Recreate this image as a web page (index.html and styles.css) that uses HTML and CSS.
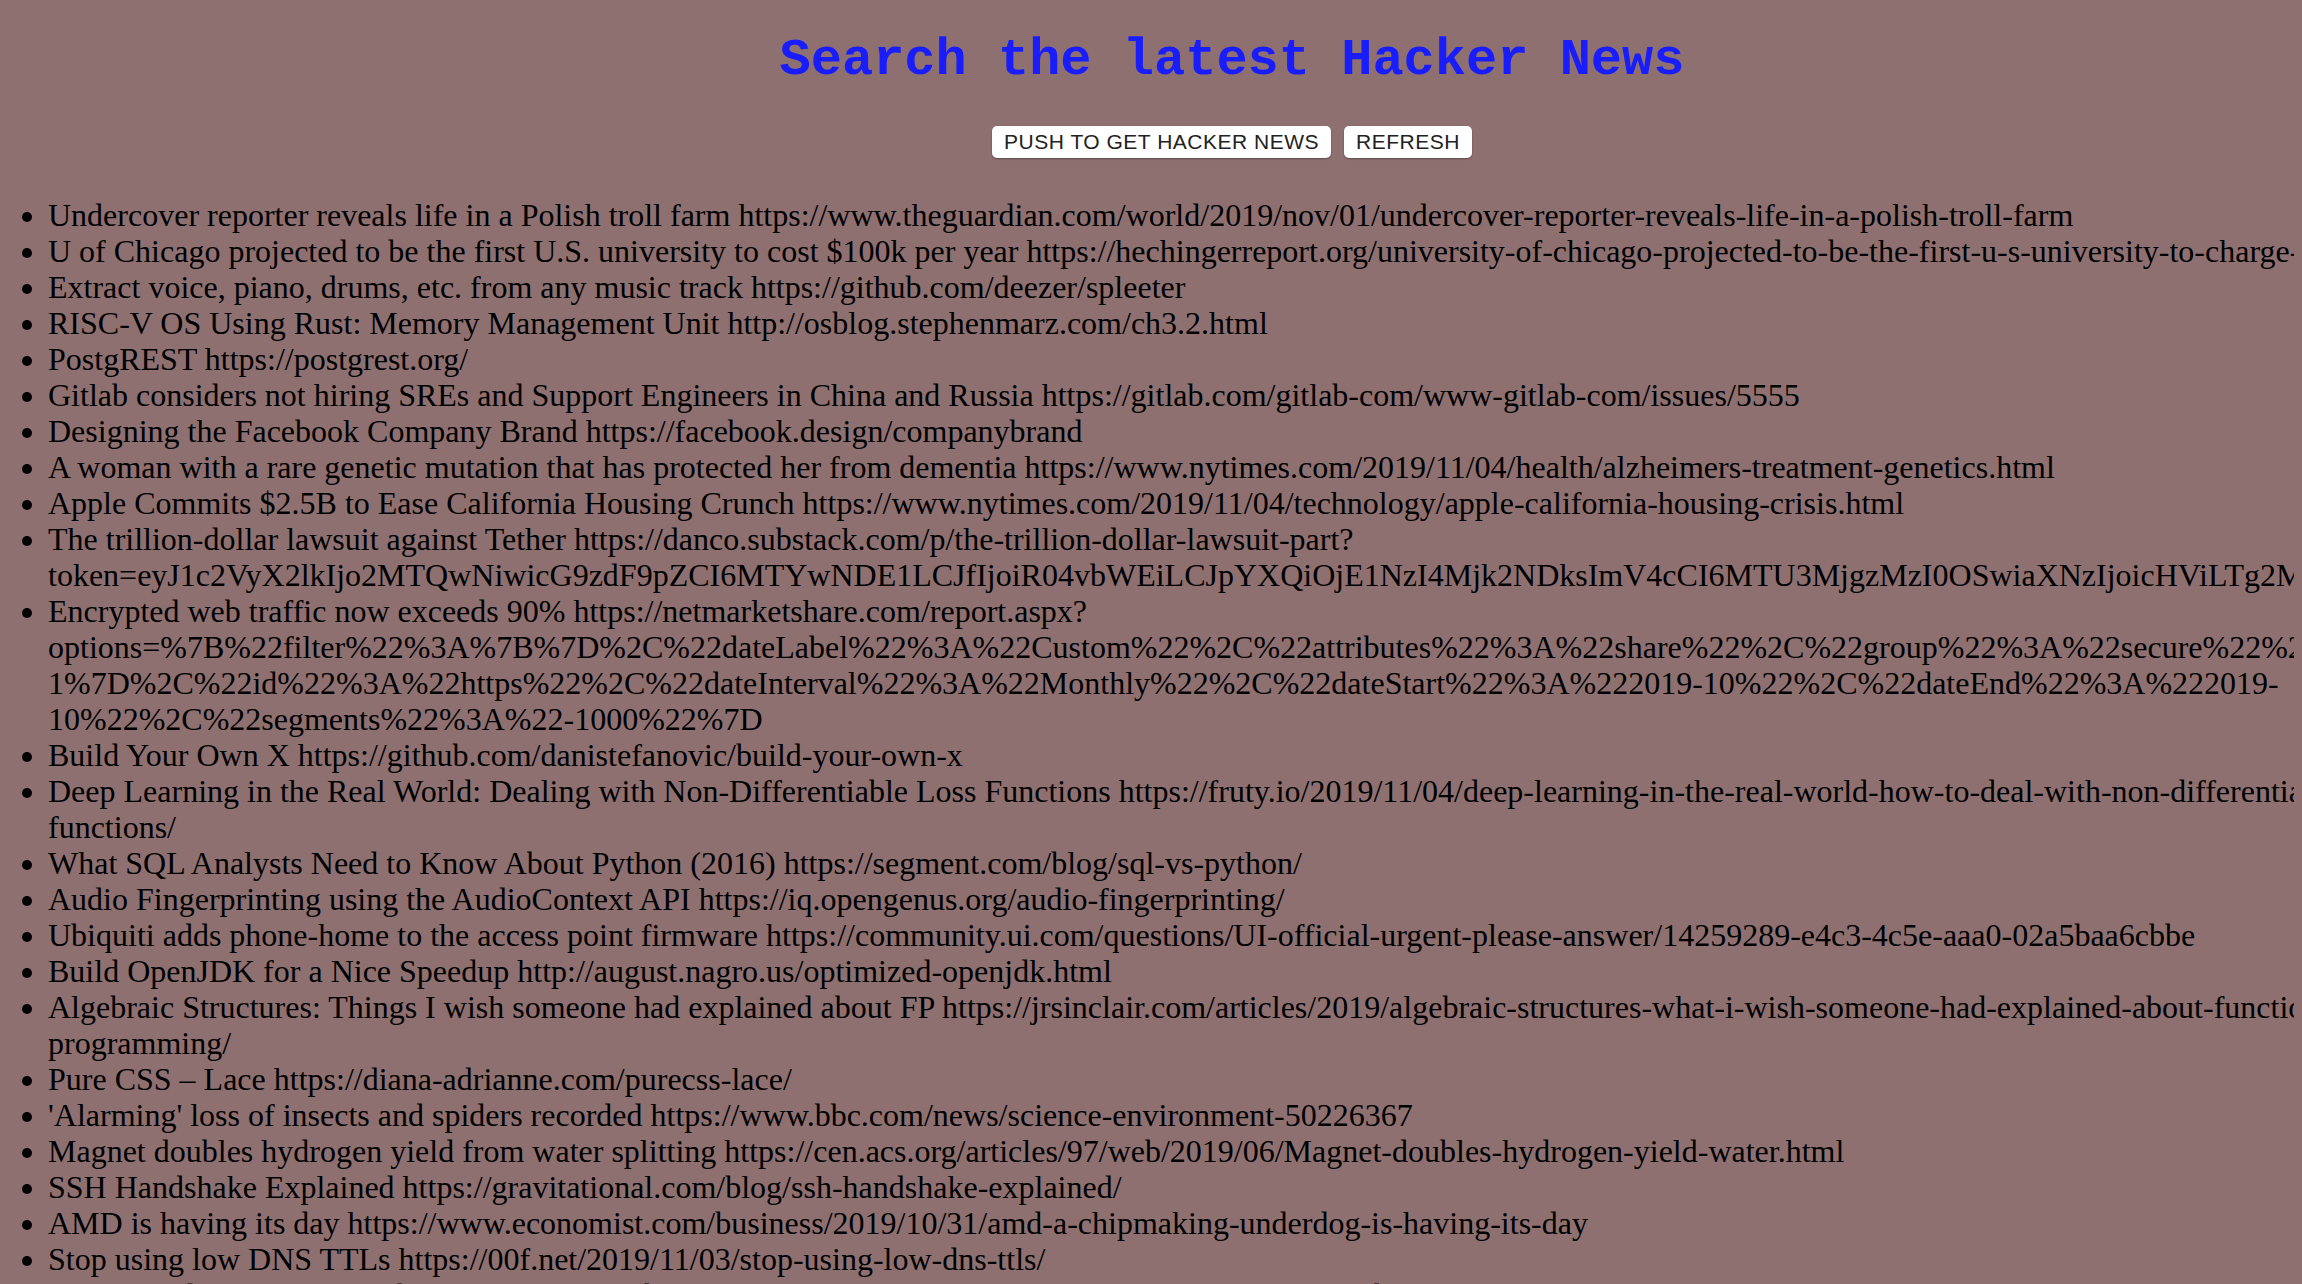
FILE: index.html
```html
<!DOCTYPE html>
<html lang="en">
<head>
<meta charset="utf-8">
<title>Search the latest Hacker News</title>
<link rel="stylesheet" href="styles.css">
</head>
<body>
<div class="app">
  <h1 class="title">Search the latest Hacker News</h1>
  <div class="actions">
    <button class="btn" type="button">PUSH TO GET HACKER NEWS</button>
    <button class="btn" type="button">REFRESH</button>
  </div>
  <ul class="news">
    <li>Undercover reporter reveals life in a Polish troll farm https://www.theguardian.com/world/2019/nov/01/undercover-reporter-reveals-life-in-a-polish-troll-farm</li>
    <li>U of Chicago projected to be the first U.S. university to cost $100k per year https://hechingerreport.org/university-of-chicago-projected-to-be-the-first-u-s-university-to-charge-100k/</li>
    <li>Extract voice, piano, drums, etc. from any music track https://github.com/deezer/spleeter</li>
    <li>RISC-V OS Using Rust: Memory Management Unit http://osblog.stephenmarz.com/ch3.2.html</li>
    <li>PostgREST https://postgrest.org/</li>
    <li>Gitlab considers not hiring SREs and Support Engineers in China and Russia https://gitlab.com/gitlab-com/www-gitlab-com/issues/5555</li>
    <li>Designing the Facebook Company Brand https://facebook.design/companybrand</li>
    <li>A woman with a rare genetic mutation that has protected her from dementia https://www.nytimes.com/2019/11/04/health/alzheimers-treatment-genetics.html</li>
    <li>Apple Commits $2.5B to Ease California Housing Crunch https://www.nytimes.com/2019/11/04/technology/apple-california-housing-crisis.html</li>
    <li>The trillion-dollar lawsuit against Tether https://danco.substack.com/p/the-trillion-dollar-lawsuit-part?token=eyJ1c2VyX2lkIjo2MTQwNiwicG9zdF9pZCI6MTYwNDE1LCJfIjoiR04vbWEiLCJpYXQiOjE1NzI4Mjk2NDksImV4cCI6MTU3MjgzMzI0OSwiaXNzIjoicHViLTg2MjIiLCJzd</li>
    <li>Encrypted web traffic now exceeds 90% https://netmarketshare.com/report.aspx?options=%7B%22filter%22%3A%7B%7D%2C%22dateLabel%22%3A%22Custom%22%2C%22attributes%22%3A%22share%22%2C%22group%22%3A%22secure%22%2C%22sort%22%3A%7B%22share%22%3A-1%7D%2C%22id%22%3A%22https%22%2C%22dateInterval%22%3A%22Monthly%22%2C%22dateStart%22%3A%222019-10%22%2C%22dateEnd%22%3A%222019-10%22%2C%22segments%22%3A%22-1000%22%7D</li>
    <li>Build Your Own X https://github.com/danistefanovic/build-your-own-x</li>
    <li>Deep Learning in the Real World: Dealing with Non-Differentiable Loss Functions https://fruty.io/2019/11/04/deep-learning-in-the-real-world-how-to-deal-with-non-differentiable-loss-functions/</li>
    <li>What SQL Analysts Need to Know About Python (2016) https://segment.com/blog/sql-vs-python/</li>
    <li>Audio Fingerprinting using the AudioContext API https://iq.opengenus.org/audio-fingerprinting/</li>
    <li>Ubiquiti adds phone-home to the access point firmware https://community.ui.com/questions/UI-official-urgent-please-answer/14259289-e4c3-4c5e-aaa0-02a5baa6cbbe</li>
    <li>Build OpenJDK for a Nice Speedup http://august.nagro.us/optimized-openjdk.html</li>
    <li>Algebraic Structures: Things I wish someone had explained about FP https://jrsinclair.com/articles/2019/algebraic-structures-what-i-wish-someone-had-explained-about-functional-programming/</li>
    <li>Pure CSS – Lace https://diana-adrianne.com/purecss-lace/</li>
    <li>'Alarming' loss of insects and spiders recorded https://www.bbc.com/news/science-environment-50226367</li>
    <li>Magnet doubles hydrogen yield from water splitting https://cen.acs.org/articles/97/web/2019/06/Magnet-doubles-hydrogen-yield-water.html</li>
    <li>SSH Handshake Explained https://gravitational.com/blog/ssh-handshake-explained/</li>
    <li>AMD is having its day https://www.economist.com/business/2019/10/31/amd-a-chipmaking-underdog-is-having-its-day</li>
    <li>Stop using low DNS TTLs https://00f.net/2019/11/03/stop-using-low-dns-ttls/</li>
    <li>Thinking about the reasonable limits of the web https://www.example.com/2019/11/04/limits-of-the-web</li>
  </ul>
</div>
</body>
</html>
```
FILE: styles.css
```css
html {
  background: #8f7071;
  overflow-x: hidden;
  scrollbar-width: none;
}

body {
  margin: 8px;
  font-family: "Liberation Serif", "Times New Roman", serif;
  color: #000;
}

.app {
  width: 2448px;
  text-align: center;
}

.title {
  margin: 23px 0 36px;
  font-family: "Liberation Mono", "Courier New", monospace;
  font-size: 52px;
  font-weight: bold;
  color: #1a1dfb;
}

.actions {
  display: flex;
  justify-content: center;
  gap: 13px;
}

.btn {
  height: 32px;
  padding: 0 12px;
  border: none;
  border-radius: 5px;
  background: #fff;
  color: #222;
  font-family: "Liberation Sans", Arial, sans-serif;
  font-size: 21px;
  letter-spacing: 0.5px;
  box-shadow: 0 1px 2px rgba(0, 0, 0, 0.35);
}

.news {
  margin: 39px 0 0;
  padding-left: 40px;
  text-align: left;
  font-size: 32px;
  line-height: 36px;
}
```
